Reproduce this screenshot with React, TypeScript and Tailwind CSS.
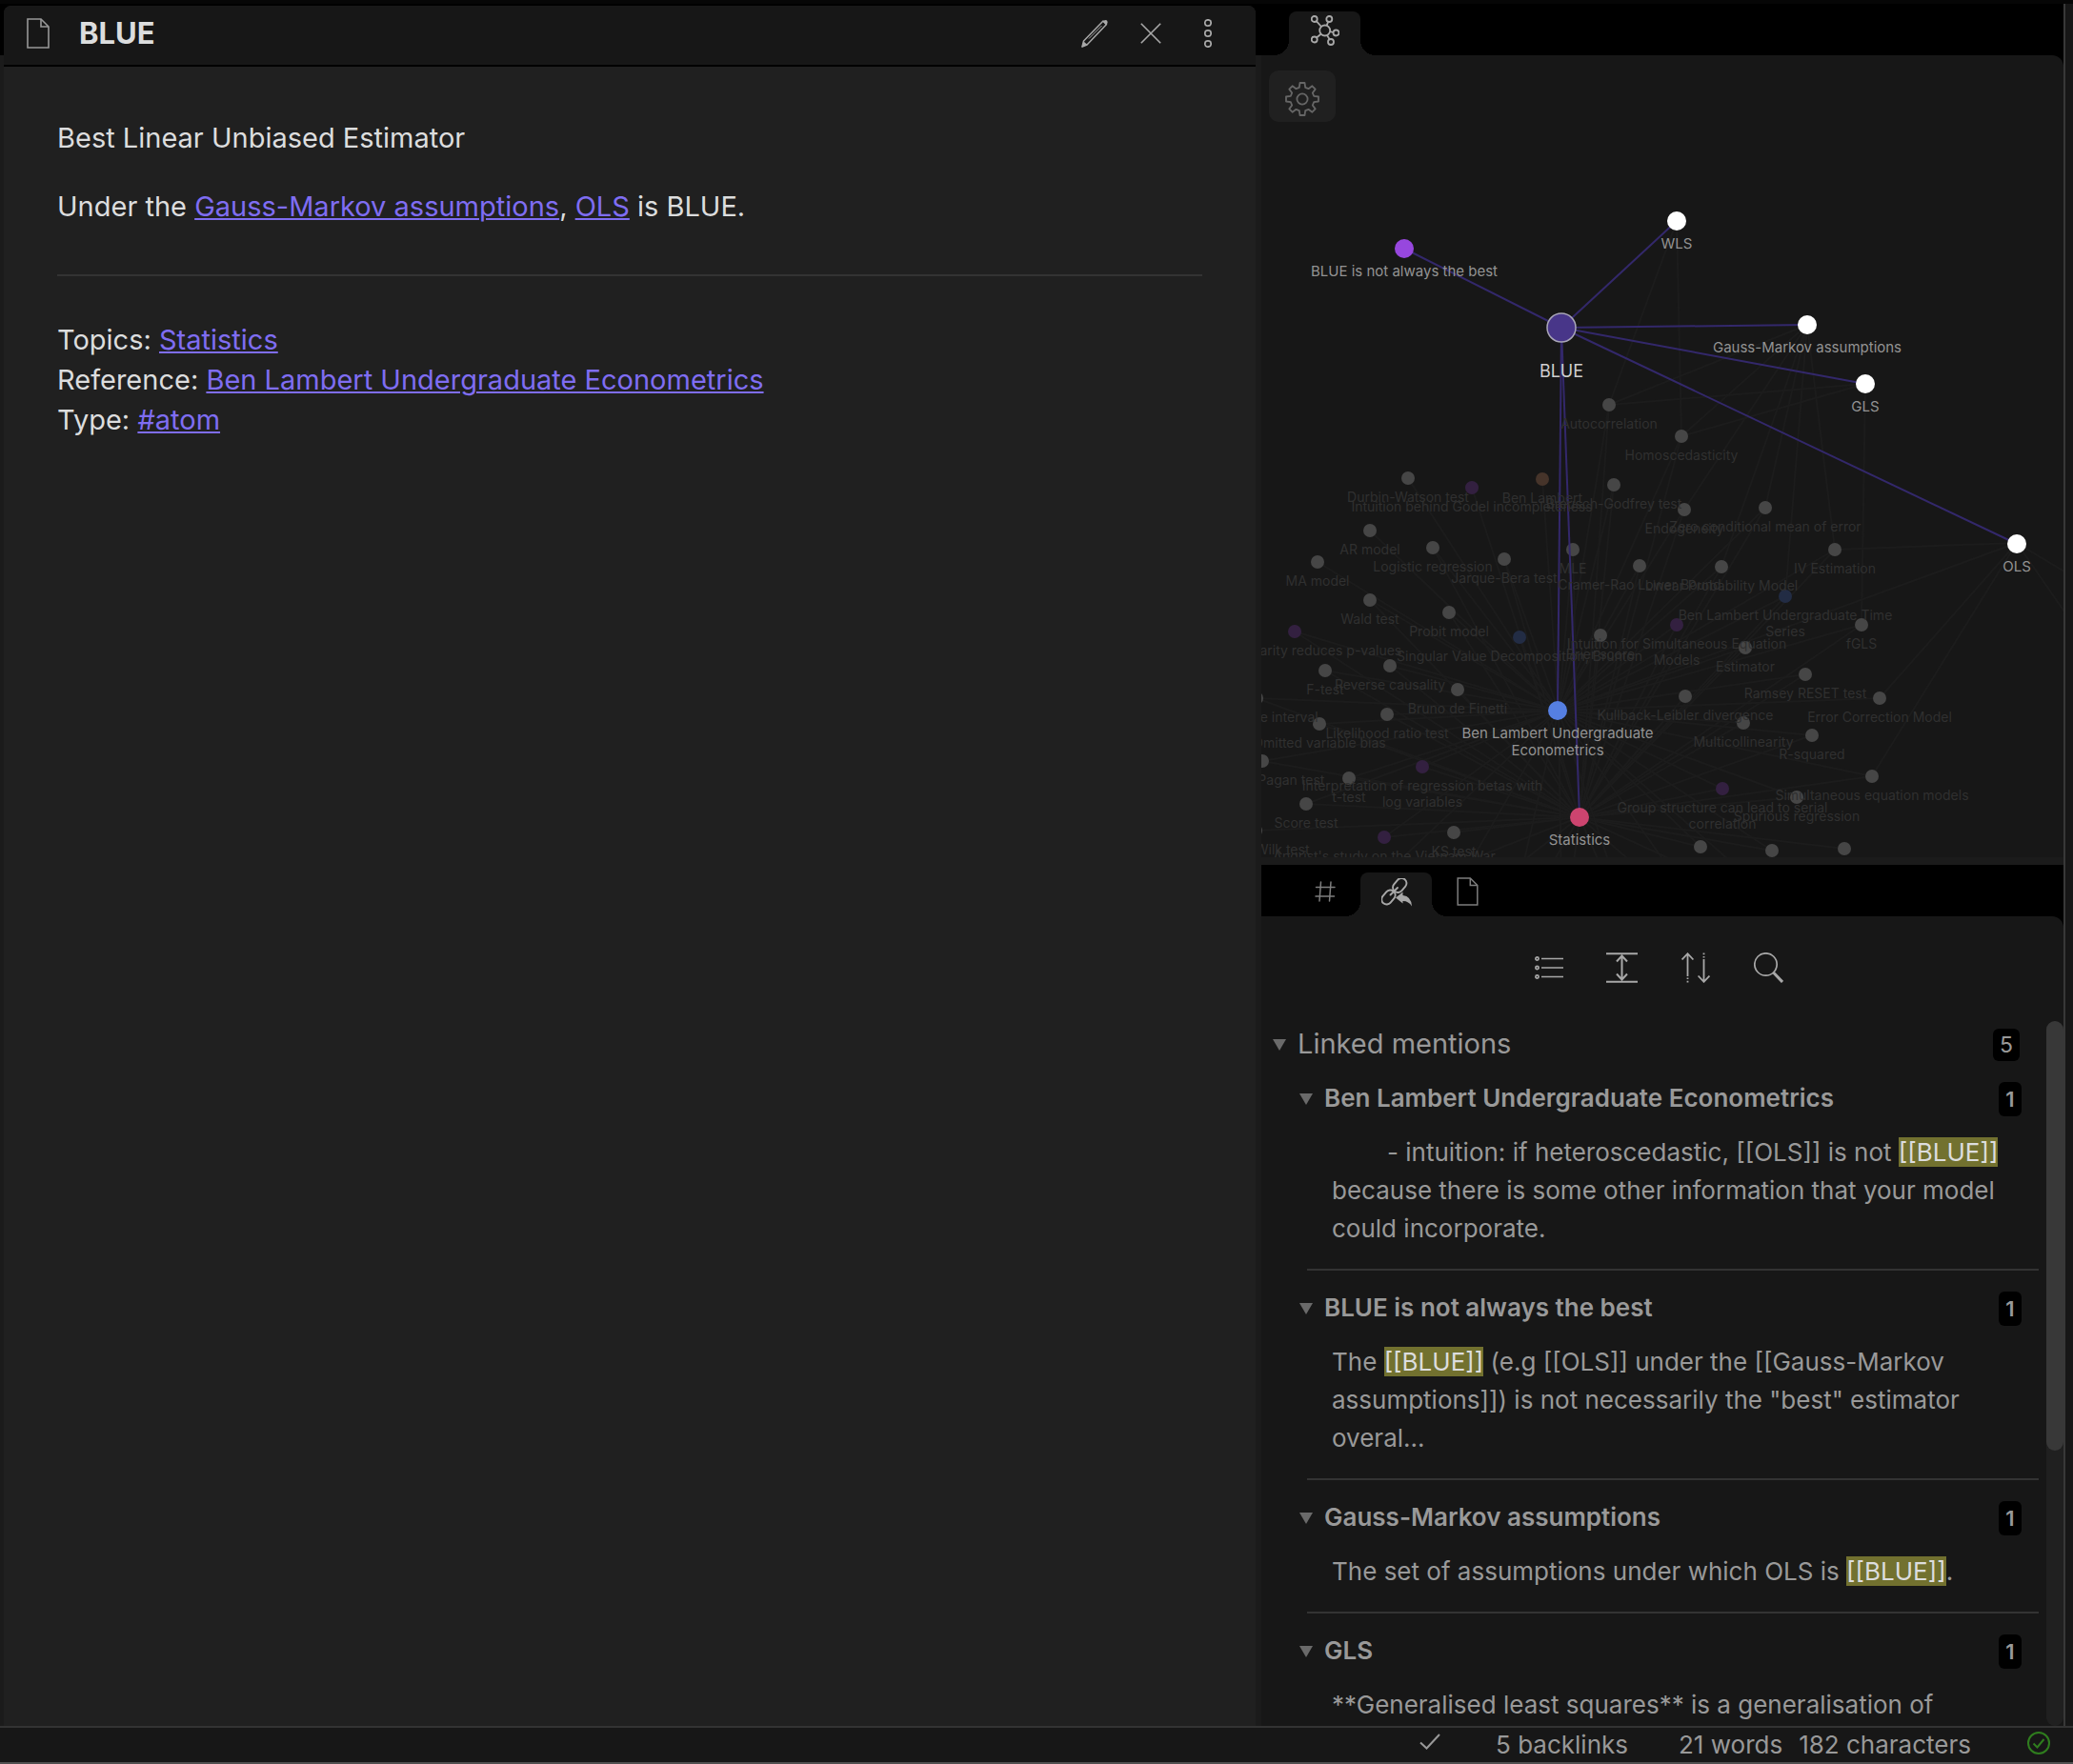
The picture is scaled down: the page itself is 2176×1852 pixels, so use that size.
import { useState, type ReactNode } from "react";

type GraphNode = { x: number; y: number; label: string[]; tone?: "gray" | "purple" | "brown" | "blue"; to: string };

const hubs = { b: [1636, 746], s: [1658, 858] } as const;

const dimNodes: GraphNode[] = [
  { x: 1689, y: 425, label: ["Autocorrelation"], to: "bs" },
  { x: 1765, y: 458, label: ["Homoscedasticity"], to: "bs" },
  { x: 1478, y: 502, label: ["Durbin-Watson test"], to: "b" },
  { x: 1545, y: 512, label: ["Intuition behind Godel incompleteness"], tone: "purple", to: "s" },
  { x: 1619, y: 503, label: ["Ben Lambert"], tone: "brown", to: "b" },
  { x: 1694, y: 509, label: ["Breusch-Godfrey test"], to: "bs" },
  { x: 1768, y: 535, label: ["Endogeneity"], to: "bs" },
  { x: 1853, y: 533, label: ["Zero conditional mean of error"], to: "bs" },
  { x: 1438, y: 557, label: ["AR model"], to: "b" },
  { x: 1504, y: 575, label: ["Logistic regression"], to: "bs" },
  { x: 1383, y: 590, label: ["MA model"], to: "b" },
  { x: 1579, y: 587, label: ["Jarque-Bera test"], to: "bs" },
  { x: 1651, y: 577, label: ["MLE"], to: "bs" },
  { x: 1721, y: 594, label: ["Cramer-Rao Lower Bound"], to: "bs" },
  { x: 1807, y: 595, label: ["Linear Probability Model"], to: "bs" },
  { x: 1926, y: 577, label: ["IV Estimation"], to: "bs" },
  { x: 1438, y: 630, label: ["Wald test"], to: "bs" },
  { x: 1521, y: 643, label: ["Probit model"], to: "bs" },
  { x: 1359, y: 663, label: ["Multicollinearity reduces p-values"], tone: "purple", to: "bs" },
  { x: 1595, y: 669, label: ["Singular Value Decomposition, Brunton"], tone: "blue", to: "s" },
  { x: 1680, y: 667, label: ["Brier score"], to: "s" },
  { x: 1760, y: 656, label: ["Intuition for Simultaneous Equation", "Models"], tone: "purple", to: "bs" },
  { x: 1874, y: 626, label: ["Ben Lambert Undergraduate Time", "Series"], tone: "blue", to: "bs" },
  { x: 1954, y: 656, label: ["fGLS"], to: "bs" },
  { x: 1832, y: 680, label: ["Estimator"], to: "bs" },
  { x: 1391, y: 704, label: ["F-test"], to: "bs" },
  { x: 1459, y: 699, label: ["Reverse causality"], to: "bs" },
  { x: 1530, y: 724, label: ["Bruno de Finetti"], to: "s" },
  { x: 1895, y: 708, label: ["Ramsey RESET test"], to: "bs" },
  { x: 1769, y: 731, label: ["Kullback-Leibler divergence"], to: "s" },
  { x: 1973, y: 733, label: ["Error Correction Model"], to: "b" },
  { x: 1319, y: 733, label: ["Confidence interval"], to: "bs" },
  { x: 1456, y: 750, label: ["Likelihood ratio test"], to: "bs" },
  { x: 1385, y: 760, label: ["Omitted variable bias"], to: "bs" },
  { x: 1830, y: 759, label: ["Multicollinearity"], to: "bs" },
  { x: 1902, y: 772, label: ["R-squared"], to: "bs" },
  { x: 1325, y: 799, label: ["Breusch-Pagan test"], to: "bs" },
  { x: 1493, y: 805, label: ["Interpretation of regression betas with", "log variables"], tone: "purple", to: "bs" },
  { x: 1416, y: 817, label: ["t-test"], to: "bs" },
  { x: 1965, y: 815, label: ["Simultaneous equation models"], to: "bs" },
  { x: 1808, y: 828, label: ["Group structure can lead to serial", "correlation"], tone: "purple", to: "bs" },
  { x: 1886, y: 837, label: ["Spurious regression"], to: "bs" },
  { x: 1371, y: 844, label: ["Score test"], to: "bs" },
  { x: 1318, y: 872, label: ["Shapiro-Wilk test"], to: "s" },
  { x: 1453, y: 879, label: ["Angrist's study on the Vietnam War"], tone: "purple", to: "bs" },
  { x: 1526, y: 874, label: ["KS test"], to: "s" },
  { x: 1785, y: 889, label: [], to: "bs" },
  { x: 1860, y: 893, label: [], to: "bs" },
  { x: 1936, y: 891, label: [], to: "s" },
  { x: 1420, y: 950, label: [], to: "bs" },
  { x: 1500, y: 980, label: [], to: "bs" },
  { x: 1580, y: 990, label: [], to: "bs" },
  { x: 1640, y: 1000, label: [], to: "bs" },
  { x: 1720, y: 1000, label: [], to: "bs" },
  { x: 1800, y: 980, label: [], to: "bs" },
  { x: 1880, y: 960, label: [], to: "bs" },
];

const toneFill = { gray: "#464646", purple: "#332040", brown: "#46342a", blue: "#222c44" };

const faintLinks = [
  [1760, 232, 1689, 425], [1760, 232, 1765, 458], [1897, 341, 1689, 425], [1897, 341, 1765, 458],
  [1897, 341, 1768, 535], [1897, 341, 1807, 595], [1897, 341, 1853, 533], [1897, 341, 1874, 626],
  [1897, 341, 1926, 577], [1958, 403, 1689, 425], [1958, 403, 1765, 458], [1958, 403, 1954, 656],
  [2117, 570, 1926, 577], [2117, 570, 1973, 733], [2117, 570, 1965, 815], [2117, 570, 2200, 690],
  [2117, 570, 2200, 620], [2117, 570, 1636, 746],
];

const mainNodes = [
  { x: 1474, y: 261, label: ["BLUE is not always the best"], fill: "#9747de" },
  { x: 1760, y: 232, label: ["WLS"], fill: "#ffffff" },
  { x: 1897, y: 341, label: ["Gauss-Markov assumptions"], fill: "#ffffff" },
  { x: 1958, y: 403, label: ["GLS"], fill: "#ffffff" },
  { x: 2117, y: 571, label: ["OLS"], fill: "#ffffff" },
  { x: 1635, y: 746, label: ["Ben Lambert Undergraduate", "Econometrics"], fill: "#557fe2" },
  { x: 1658, y: 858, label: ["Statistics"], fill: "#cd446f" },
];

function LocalGraph() {
  return (
    <svg
      className="h-full w-full font-[Inter,sans-serif]"
      viewBox="1324 58 842 842"
      preserveAspectRatio="xMidYMid slice"
      role="img"
      aria-label="Local graph"
    >
      <g stroke="#1c1c1c" strokeWidth="2">
        {dimNodes.map((n, i) => (
          <g key={i}>
            {n.to.includes("b") && <line x1={n.x} y1={n.y} x2={hubs.b[0]} y2={hubs.b[1]} />}
            {n.to.includes("s") && <line x1={n.x} y1={n.y} x2={hubs.s[0]} y2={hubs.s[1]} />}
          </g>
        ))}
        {faintLinks.map(([x1, y1, x2, y2], i) => (
          <line key={i} x1={x1} y1={y1} x2={x2} y2={y2} />
        ))}
      </g>
      {dimNodes.map((n, i) => (
        <circle key={i} cx={n.x} cy={n.y} r="7" fill={toneFill[n.tone ?? "gray"]} />
      ))}
      <g stroke="#33286b" strokeWidth="2">
        {mainNodes.map((n, i) => (
          <line key={i} x1="1639" y1="344" x2={n.x} y2={n.y} />
        ))}
      </g>
      {mainNodes.map((n, i) => (
        <circle key={i} cx={n.x} cy={n.y} r="10" fill={n.fill} />
      ))}
      <circle cx="1639" cy="344" r="15" fill="#483689" stroke="#a9a6b8" strokeWidth="1.5" />
      <g fill="#303030" fontSize="14" textAnchor="middle">
        {dimNodes.map((n, i) =>
          n.label.map((line, j) => (
            <text key={`${i}-${j}`} x={n.x} y={n.y + 25 + j * 17}>{line}</text>
          )),
        )}
      </g>
      <g fill="#939393" fontSize="15" textAnchor="middle">
        {mainNodes.map((n, i) =>
          n.label.map((line, j) => (
            <text key={`${i}-${j}`} x={n.x} y={n.y + 29 + j * 18}>{line}</text>
          )),
        )}
      </g>
      <text x="1639" y="396" fill="#cfcfcf" fontSize="18" textAnchor="middle">BLUE</text>
    </svg>
  );
}

function DocIcon({ className }: { className: string }) {
  return (
    <svg className={className} viewBox="0 0 24 32" fill="none" stroke="currentColor" strokeWidth="1.6">
      <path d="M1 1H15L23 9V31H1Z" />
      <path d="M15 1V9H23" />
    </svg>
  );
}

function PencilIcon() {
  return (
    <svg className="h-[30px] w-7" viewBox="0 0 28 30" fill="none" stroke="currentColor" strokeWidth="1.5" strokeLinejoin="round">
      <path d="M2.500 23L23 2L26.500 5.500L6 27L1 29Z" />
      <path d="M8 20.500L21.500 7" strokeWidth="1" />
      <path d="M22.500 2.500Q25 0 27 1.500Q28.500 4 26 6.500Z" fill="currentColor" stroke="none" />
      <path d="M2.500 23.500L.3 29.700L6.500 27Z" fill="currentColor" stroke="none" />
    </svg>
  );
}

function CloseIcon() {
  return (
    <svg className="size-[22px]" viewBox="0 0 22 22" stroke="currentColor" strokeWidth="1.6">
      <path d="M.8 .8L21.200 21.200M21.200 .8L.8 21.200" />
    </svg>
  );
}

function MoreIcon() {
  return (
    <svg className="h-[30px] w-2" viewBox="0 0 8 30" fill="none" stroke="currentColor" strokeWidth="1.700">
      <circle cx="4" cy="4" r="3.200" />
      <circle cx="4" cy="15" r="3.200" />
      <circle cx="4" cy="26" r="3.200" />
    </svg>
  );
}

function GraphIcon() {
  return (
    <svg className="h-8 w-[30px]" viewBox="0 0 30 32" fill="none" stroke="currentColor" strokeWidth="1.800">
      <circle cx="14.700" cy="16" r="5.500" />
      <circle cx="3.700" cy="4" r="3" />
      <circle cx="19.300" cy="4" r="3" />
      <circle cx="26.500" cy="18.500" r="3" />
      <circle cx="3.700" cy="25.500" r="3" />
      <circle cx="21" cy="28" r="3" />
      <path d="M5.800 6.200L11 12M18.200 6.800L16.600 10.800M20.200 17.200L23.500 18M6 23.500L10.600 19.800M17 21L19.600 25.300" />
    </svg>
  );
}

function GearIcon() {
  return (
    <svg className="size-9" viewBox="0 0 36 36" fill="none" stroke="currentColor" strokeWidth="1.800" strokeLinejoin="round">
      <circle cx="18" cy="18" r="5.600" />
      <path d="M15.500 1H20.500L21.200 5.800L24.500 7.200L28.400 4.300L31.700 7.600L28.800 11.500L30.200 14.800L35 15.500V20.500L30.200 21.200L28.800 24.500L31.700 28.400L28.400 31.700L24.500 28.800L21.200 30.200L20.500 35H15.500L14.800 30.200L11.500 28.800L7.600 31.700L4.300 28.400L7.200 24.500L5.800 21.200L1 20.500V15.500L5.800 14.800L7.200 11.500L4.300 7.600L7.600 4.300L11.500 7.200L14.800 5.800Z" />
    </svg>
  );
}

function HashIcon() {
  return (
    <svg className="size-[22px]" viewBox="0 0 22 22" stroke="currentColor" strokeWidth="1.500" strokeLinecap="round">
      <path d="M6.500 1L5 21M17 1L15.500 21M1.500 6.500H21M1 16H20.500" />
    </svg>
  );
}

function BacklinkIcon() {
  return (
    <svg className="h-[30px] w-8" viewBox="0 0 32 30" fill="none" stroke="currentColor" strokeWidth="1.900" strokeLinecap="round">
      <rect x="11" y="2.200" width="16.500" height="10.600" rx="5.300" transform="rotate(-50 19.250 7.500)" />
      <rect x="-.8" y="14.700" width="16.500" height="10.600" rx="5.300" transform="rotate(-50 7.450 20)" />
      <path d="M9.500 17.500L17 10" />
      <path d="M15 20.500L22.500 14.500V18Q31.500 19 32 29.500Q28.500 23.800 22.500 24V26.500Z" fill="currentColor" stroke="none" />
    </svg>
  );
}

function ListIcon() {
  return (
    <svg className="h-6 w-[30px]" viewBox="0 0 30 24" fill="none" stroke="currentColor" strokeWidth="1.700">
      <circle cx="2.500" cy="2.500" r="1.600" />
      <circle cx="2.500" cy="12" r="1.600" />
      <circle cx="2.500" cy="21.500" r="1.600" />
      <path d="M7 2.500H30M7 12H30M7 21.500H30" />
    </svg>
  );
}

function ExpandIcon() {
  return (
    <svg className="h-8 w-[33px]" viewBox="0 0 33 32" fill="none" stroke="currentColor" strokeWidth="2">
      <path d="M0 1.200H33M0 30.800H33M16.500 3.500V28.500M11 9.500L16.500 3.500L22 9.500M11 22.500L16.500 28.500L22 22.500" />
    </svg>
  );
}

function SortIcon() {
  return (
    <svg className="h-8 w-[30px]" viewBox="0 0 30 32" fill="none" stroke="currentColor" strokeWidth="1.800">
      <path d="M6.500 1.500V25M.6 7.500L6.500 1.200L12.400 7.500M23.500 7V30.500M17.600 24.500L23.500 30.800L29.400 24.500" />
      <path d="M6.500 26.500V28M6.500 29.800V31.500M23.500 5.500V4M23.500 2.200V.5" />
    </svg>
  );
}

function SearchIcon() {
  return (
    <svg className="h-8 w-[31px]" viewBox="0 0 31 32" fill="none" stroke="currentColor">
      <circle cx="12.500" cy="12.500" r="11.700" strokeWidth="1.700" />
      <path d="M20.500 21L30 31" strokeWidth="3" />
    </svg>
  );
}

function Caret({ open }: { open: boolean }) {
  return (
    <svg className={open ? "h-3 w-3.5 shrink-0 text-[#6a6a6a]" : "h-3 w-3.5 shrink-0 -rotate-90 text-[#6a6a6a]"} viewBox="0 0 14 12" fill="currentColor">
      <path d="M0 0H14L7 12Z" />
    </svg>
  );
}

function Tab({ label, active, children }: { label: string; active?: boolean; children: ReactNode }) {
  return (
    <button
      role="tab"
      aria-selected={!!active}
      aria-label={label}
      className={
        active
          ? "relative flex w-[75px] items-start justify-center rounded-t-lg bg-[#171717] text-[#a8a8a8] before:absolute before:bottom-0 before:-left-4 before:size-4 before:bg-[radial-gradient(circle_at_0_0,transparent_16px,#171717_16px)] after:absolute after:-right-4 after:bottom-0 after:size-4 after:bg-[radial-gradient(circle_at_100%_0,transparent_16px,#171717_16px)]"
          : "flex w-[75px] items-start justify-center text-[#7d7d7d]"
      }
    >
      {children}
    </button>
  );
}

function NoteLink({ children }: { children: ReactNode }) {
  return <a href="#" className="text-[#7f6df2] underline decoration-2 underline-offset-2">{children}</a>;
}

function Hit() {
  return <mark className="bg-[#72712f] text-[#dcddde]">[[BLUE]]</mark>;
}

function Backlink({ title, children }: { title: string; children: ReactNode }) {
  const [open, setOpen] = useState(true);
  return (
    <section className="ml-9 border-b-2 border-[#333333] pt-[22px] pb-[22px]">
      <button
        aria-expanded={open}
        onClick={() => setOpen(!open)}
        className="-ml-2 flex h-9 w-full items-center gap-3 pr-2.5 text-left text-[26px] leading-9 font-semibold"
      >
        <Caret open={open} />
        <span className="flex-1 pb-0.5">{title}</span>
        <span className="flex h-9 w-6 items-center justify-center rounded-md bg-black text-[22px]">1</span>
      </button>
      {open && <p className="mt-[18px] pr-6 pl-[26px] text-[26px] leading-10">{children}</p>}
    </section>
  );
}

export default function App() {
  const [open, setOpen] = useState(true);
  return (
    <div className="flex h-screen flex-col overflow-hidden border-t-4 border-[#060606] bg-[#171717] font-[Inter,sans-serif] text-[#999999]">
      <div className="grid min-h-0 flex-1 grid-cols-[1324fr_852fr]">
        <main className="flex min-w-0 bg-[linear-gradient(to_bottom,#000_54px,#1b1b1b_54px)] pt-0.5 pr-1.5 pl-1">
          <article className="flex min-w-0 flex-1 flex-col overflow-hidden rounded-t-lg bg-[#202020]">
            <header className="flex h-16 shrink-0 items-center border-b-2 border-black bg-[#171717] pr-[46px] pb-1 pl-6 text-[#a8a8a8]">
              <DocIcon className="h-8 w-6 text-[#999999]" />
              <h1 className="flex-1 pl-[31px] text-[31px] leading-9 font-bold text-[#dcddde]">BLUE</h1>
              <div className="flex items-center">
                <button aria-label="Edit" className="mr-[34px]"><PencilIcon /></button>
                <button aria-label="Close" className="mr-[45px]"><CloseIcon /></button>
                <button aria-label="More options"><MoreIcon /></button>
              </div>
            </header>
            <div className="pt-[54px] pr-14 pl-14 text-[29px] leading-[42px] text-[#dcddde]">
              <p>Best Linear Unbiased Estimator</p>
              <p className="mt-[30px]">
                Under the <NoteLink>Gauss-Markov assumptions</NoteLink>, <NoteLink>OLS</NoteLink> is BLUE.
              </p>
              <hr className="mt-[50px] mb-[46px] border-t-2 border-[#333333]" />
              <p>Topics: <NoteLink>Statistics</NoteLink></p>
              <p>Reference: <NoteLink>Ben Lambert Undergraduate Econometrics</NoteLink></p>
              <p>Type: <NoteLink>#atom</NoteLink></p>
            </div>
          </article>
        </main>

        <aside className="flex min-h-0 min-w-0 border-r-8 border-[#171717]">
          <div className="flex min-w-0 flex-1 flex-col border-r-2 border-[#383838]">
            <section className="flex min-h-0 flex-[896] flex-col bg-black">
              <div role="tablist" className="flex h-[54px] shrink-0 bg-black pt-2 pl-[29px]">
                <Tab label="Graph view" active><span className="pt-1"><GraphIcon /></span></Tab>
              </div>
              <div className="relative min-h-0 flex-1 overflow-hidden rounded-tr-xl bg-[#171717]">
                <LocalGraph />
                <button aria-label="Graph settings" className="absolute top-4 left-2 flex h-[54px] w-[70px] items-center justify-center rounded-[10px] bg-[#202020] pt-1.5 text-[#666666]">
                  <GearIcon />
                </button>
              </div>
            </section>
            <div className="h-2 shrink-0 bg-[#1b1b1b]" />
            <section className="flex min-h-0 flex-[904] flex-col bg-black">
              <div role="tablist" className="flex h-[54px] shrink-0 bg-black pt-2 pl-[29px]">
                <Tab label="Tags"><span className="pt-[9px]"><HashIcon /></span></Tab>
                <Tab label="Backlinks" active><span className="pt-1.5"><BacklinkIcon /></span></Tab>
                <Tab label="Outline"><span className="pt-[5px]"><DocIcon className="h-[30px] w-[23px]" /></span></Tab>
              </div>
              <div className="flex min-h-0 flex-1 flex-col rounded-tr-xl bg-[#171717]">
                <div className="flex h-[110px] shrink-0 items-center justify-center pr-2 pb-0.5 text-[#a8a8a8]">
                  <button aria-label="Collapse results" className="flex w-[77px] justify-center"><ListIcon /></button>
                  <button aria-label="Show more context" className="flex w-[77px] justify-center"><ExpandIcon /></button>
                  <button aria-label="Change sort order" className="flex w-[77px] justify-center"><SortIcon /></button>
                  <button aria-label="Show search filter" className="flex w-[77px] justify-center"><SearchIcon /></button>
                </div>
                <div className="flex min-h-0 flex-1">
                  <div className="min-w-0 flex-1 overflow-hidden pt-2 pr-2 pl-3">
                    <button
                      aria-expanded={open}
                      onClick={() => setOpen(!open)}
                      className="flex h-[34px] w-full items-center gap-3 pr-5 text-left text-[29px] leading-[34px]"
                    >
                      <Caret open={open} />
                      <span className="flex-1 pb-0.5">Linked mentions</span>
                      <span className="flex h-[34px] w-7 items-center justify-center rounded-md bg-black text-[23px]">5</span>
                    </button>
                    {open && (
                      <>
                        <Backlink title="Ben Lambert Undergraduate Econometrics">
                          <span className="pl-[58px]">- intuition: if heteroscedastic, [[OLS]] is not <Hit /></span> because there is
                          some other information that your model could incorporate.
                        </Backlink>
                        <Backlink title="BLUE is not always the best">
                          The <Hit /> (e.g [[OLS]] under the [[Gauss-Markov assumptions]]) is not necessarily the "best"
                          estimator overal...
                        </Backlink>
                        <Backlink title="Gauss-Markov assumptions">
                          The set of assumptions under which OLS is <Hit />.
                        </Backlink>
                        <Backlink title="GLS">**Generalised least squares** is a generalisation of</Backlink>
                      </>
                    )}
                  </div>
                  <div className="w-[18px] rounded-full bg-[#202020]">
                    <div className="h-[61%] rounded-full bg-[#383838]" />
                  </div>
                </div>
              </div>
            </section>
          </div>
        </aside>
      </div>

      <footer className="flex h-10 shrink-0 items-center justify-end border-t-2 border-b-2 border-t-[#333333] border-b-[#505050] bg-[#171717] pr-6 text-[26px] leading-9">
        <svg className="mr-[58px] mb-2 h-[17px] w-[22px]" viewBox="0 0 22 17" fill="none" stroke="currentColor" strokeWidth="2" aria-label="Saved">
          <path d="M1 9.500L7.500 15.500L21 1" />
        </svg>
        <span className="mr-[53px]">5 backlinks</span>
        <span className="mr-[17px]">21 words</span>
        <span>182 characters</span>
        <svg className="mb-1 ml-[59px] size-6" viewBox="0 0 24 24" fill="none" stroke="#2f7d1e" strokeWidth="2" aria-label="Synced">
          <circle cx="12" cy="12" r="11" />
          <path d="M6.500 12.500L10.500 16.500L17.500 8" />
        </svg>
      </footer>
    </div>
  );
}
